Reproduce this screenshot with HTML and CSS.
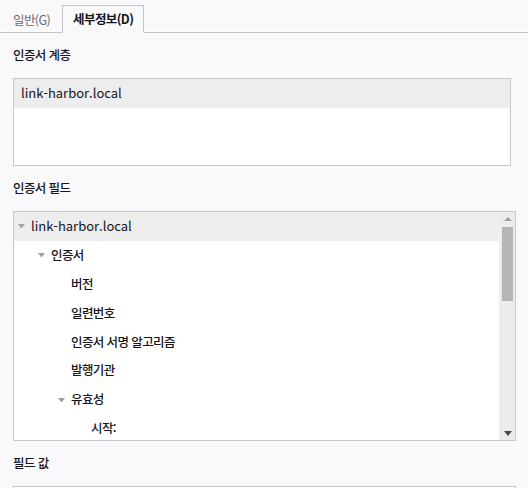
FILE: index.html
```html
<!DOCTYPE html>
<html lang="ko">
<head>
<meta charset="utf-8">
<link rel="stylesheet" href="styles.css">
</head>
<body>
<div class="tabbar">
  <div class="tab ko">일반(G)</div>
  <div class="tab active ko">세부정보(D)</div>
</div>
<div class="content">
  <div class="label ko">인증서 계층</div>
  <div class="box hier">
    <div class="row sel plain">link-harbor.local</div>
  </div>
  <div class="label ko">인증서 필드</div>
  <div class="box fields">
    <div class="tree">
      <div class="row sel l0"><span class="tw"></span>link-harbor.local</div>
      <div class="row l1 ko"><span class="tw"></span>인증서</div>
      <div class="row l2 ko"><span class="sp"></span>버전</div>
      <div class="row l2 ko"><span class="sp"></span>일련번호</div>
      <div class="row l2 ko"><span class="sp"></span>인증서 서명 알고리즘</div>
      <div class="row l2 ko"><span class="sp"></span>발행기관</div>
      <div class="row l2 ko"><span class="tw"></span>유효성</div>
      <div class="row l3 ko"><span class="sp"></span>시작:</div>
    </div>
    <div class="scrollbar">
      <div class="arrow up"></div>
      <div class="track"><div class="thumb"></div></div>
      <div class="arrow down"></div>
    </div>
  </div>
  <div class="label ko">필드 값</div>
  <div class="box value"></div>
</div>
</body>
</html>
```
FILE: styles.css
```css
html, body {
  margin: 0;
  padding: 0;
  background: #f9f9fb;
  height: 488px;
  overflow: hidden;
}
body {
  font-family: "Noto Sans CJK KR", "Noto Sans", sans-serif;
  font-size: 13px;
  font-weight: 400;
  color: #15141a;
}
.ko {
  font-size: 12.5px;
  font-weight: 500;
  letter-spacing: -0.6px;
}
.tabbar {
  display: flex;
  align-items: flex-end;
  height: 32px;
  padding-left: 2px;
  border-bottom: 1px solid #c4c4c6;
  box-shadow: 0 -1px 0 #ffffff inset;
}
.tab {
  height: 26px;
  line-height: 26px;
  padding: 0 12px 0 11px;
  color: #6a6a70;
  margin-bottom: -1px;
}
.tab.ko {
  font-weight: 400;
}
.tab.active {
  color: #15141a;
  font-weight: bold;
  background: #f9f9fb;
  border: 1px solid #c4c4c6;
  border-bottom: 1px solid #f9f9fb;
  padding: 0 10px;
}
.content {
  padding: 0 12px 0 13px;
  display: flex;
  flex-direction: column;
}
.label {
  height: 22px;
  line-height: 22px;
  margin-top: 11px;
  margin-bottom: 12px;
}
.box {
  background: #ffffff;
  border: 1px solid #c8c8ca;
}
.hier {
  width: 496px;
  height: 86px;
}
.row {
  height: 28.9px;
  line-height: 28.9px;
  display: flex;
  align-items: center;
  white-space: nowrap;
}
.row.sel {
  background: #ededed;
}
.row.plain {
  padding-left: 7px;
}
.fields {
  width: 501px;
  height: 228px;
  display: flex;
  overflow: hidden;
}
.tree {
  flex: 1;
}
.tw, .sp {
  width: 8px;
  height: 8px;
  margin-right: 6px;
  flex: none;
}
.tw::before {
  content: "";
  display: block;
  margin: 2px 0 0 1px;
  border-left: 3.5px solid transparent;
  border-right: 3.5px solid transparent;
  border-top: 4px solid #a2a2a6;
}
.l0 { padding-left: 3px; }
.l1 { padding-left: 23px; }
.l2 { padding-left: 43px; }
.l3 { padding-left: 63px; }
.scrollbar {
  width: 15px;
  background: #ececec;
  display: flex;
  flex-direction: column;
  border-left: 1px solid #f0f0f0;
}
.arrow {
  height: 14px;
  display: flex;
  align-items: center;
  justify-content: center;
}
.arrow::before {
  content: "";
  border-left: 4px solid transparent;
  border-right: 4px solid transparent;
}
.arrow.up::before {
  border-bottom: 4px solid #a0a0a0;
}
.arrow.down::before {
  border-top: 5px solid #4a4a4a;
}
.track {
  flex: 1;
  padding: 1px 2px 0 2px;
}
.thumb {
  height: 74px;
  background: #b6b6b6;
}
.value {
  width: 501px;
  height: 40px;
}
```
